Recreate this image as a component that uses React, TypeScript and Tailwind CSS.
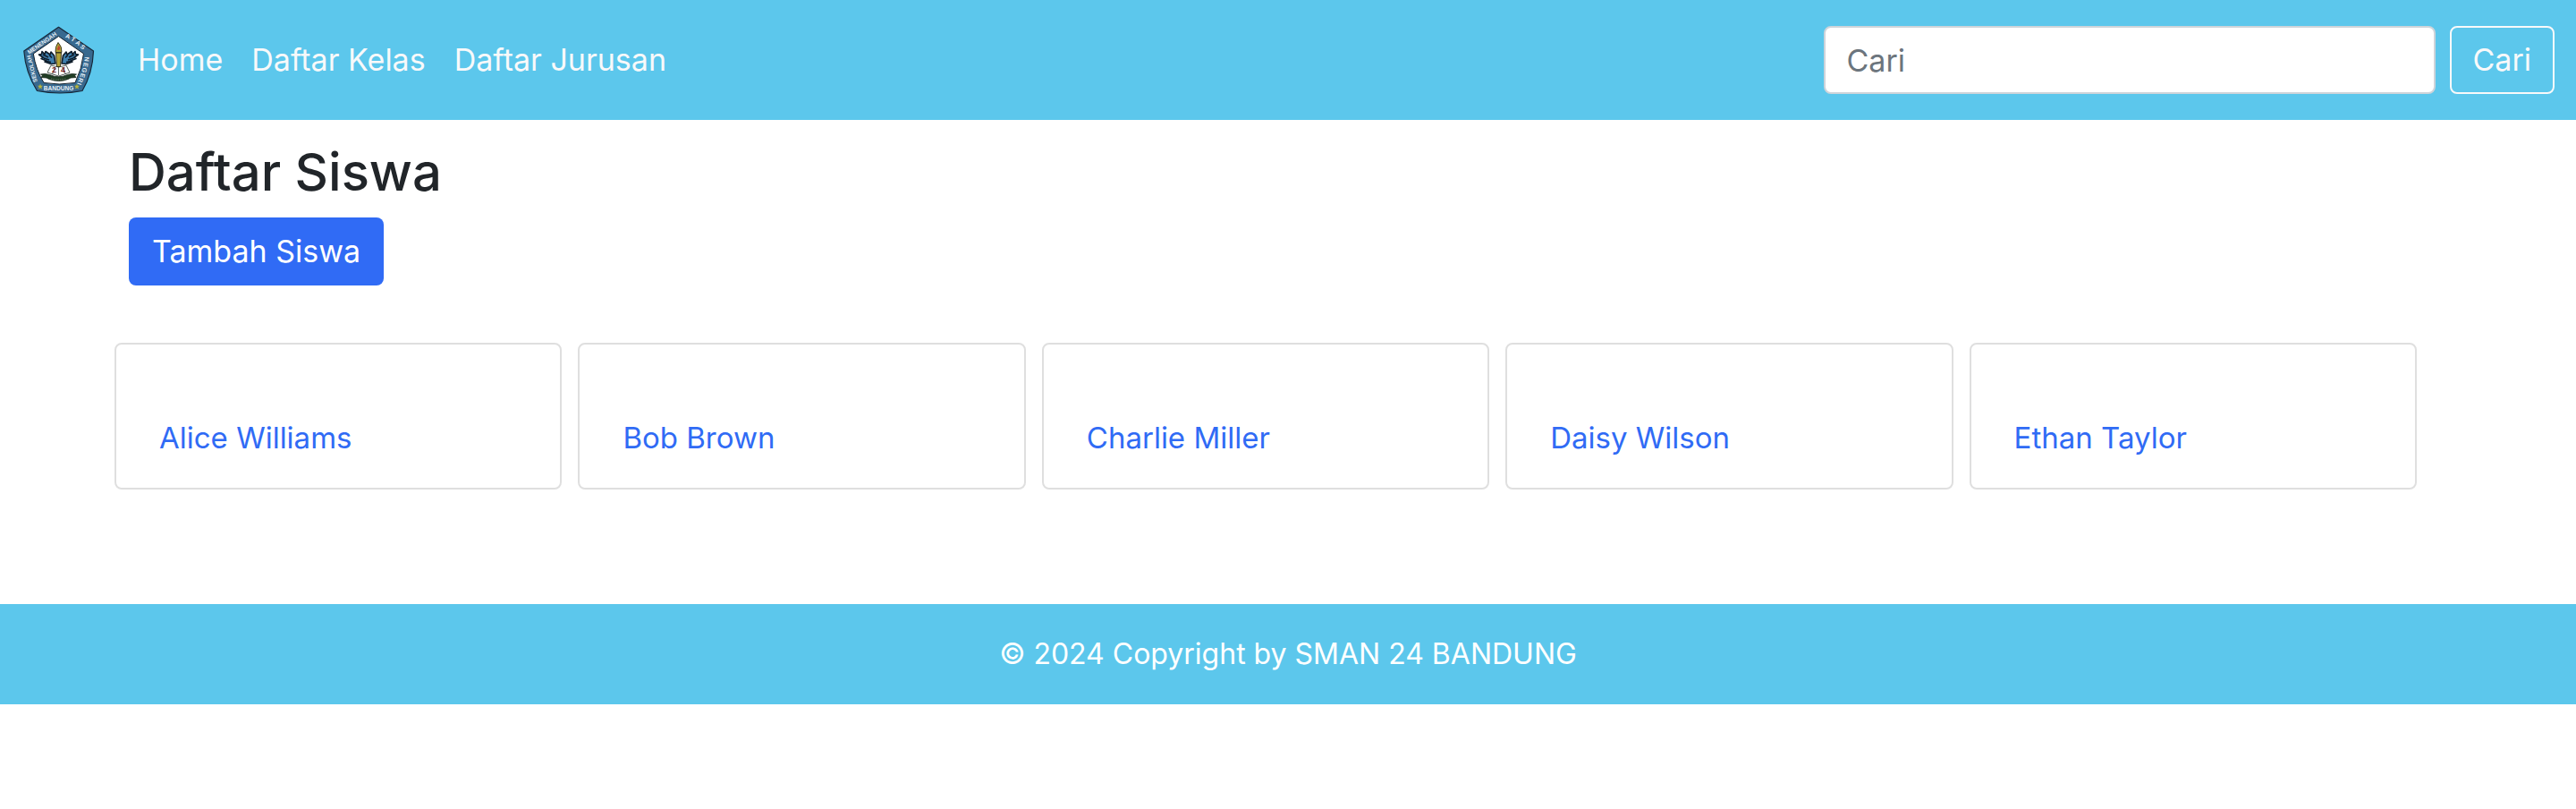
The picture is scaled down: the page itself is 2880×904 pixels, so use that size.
const navLinks = ["Home", "Daftar Kelas", "Daftar Jurusan"];
const students = ["Alice Williams", "Bob Brown", "Charlie Miller", "Daisy Wilson", "Ethan Taylor"];

function SchoolLogo() {
  return (
    <svg viewBox="26 30 80 76" className="h-[76px] w-20 font-['Liberation_Sans',sans-serif]" role="img" aria-label="SMAN 24 Bandung">
      <path d="M65.5 31.3 104.5 58Q103.500 83 92 102.500Q67 107.500 41.500 102.500Q28.500 82 26.800 58Z" fill="#38698f" stroke="#16283a" strokeWidth="1.200" strokeLinejoin="round" />
      <path d="M65.500 41.500 93.500 61Q91.500 78 84 93.500Q66 96.500 49 93.500Q40 79 37.300 61Z" fill="#fff" stroke="#13202c" strokeWidth="1" />
      <g fill="#e4eef5" fontSize="7" fontWeight="bold" textAnchor="middle">
        <text transform="translate(48.200 51) rotate(-35)" fontSize="6.500">MENENGAH</text>
        <text transform="translate(75 43.800) rotate(22)">A</text>
        <text transform="translate(80.500 47) rotate(32)">T</text>
        <text transform="translate(86 51) rotate(36)">A</text>
        <text transform="translate(91 55.300) rotate(42)">S</text>
        <text transform="translate(35 78) rotate(-104)" fontSize="6.300" dy="3">SEKOLAH</text>
        <text transform="translate(94.500 67) rotate(94)">N</text>
        <text transform="translate(93.500 73) rotate(98)">E</text>
        <text transform="translate(92 79) rotate(101)">G</text>
        <text transform="translate(90 84.800) rotate(106)">E</text>
        <text transform="translate(88 90) rotate(109)">R</text>
        <text transform="translate(86.500 94) rotate(110)">I</text>
        <text x="65.500" y="101.800" fontSize="6.600">BANDUNG</text>
      </g>
      <g fill="#b9b53b">
        <path d="m45 94.500.8 2.200h2.300l-1.800 1.500.7 2.400-2-1.400-2 1.400.7-2.400-1.800-1.500h2.300z" />
        <path d="m86 94.500.8 2.200h2.300l-1.800 1.500.7 2.400-2-1.400-2 1.400.7-2.400-1.800-1.500h2.300z" />
      </g>
      <g fill="#3f7fae" stroke="#0f1d2a" strokeWidth="1.600" strokeLinejoin="round">
        <path d="m47 58.500 3 3 1-3 5 3.500 1-3 3.500 4 1.500 9-5 .5-7-2.500 2-1-6-2.500 2.500-1-5-3.500 3-.5z" />
        <path d="m84 58.500-3 3-1-3-5 3.500-1-3-3.500 4-1.500 9 5 .5 7-2.500-2-1 6-2.500-2.500-1 5-3.500-3-.5z" />
        <path d="m48 62 6 3m-5 1 6 2m-3 1.500 5 1m-2-8 3 3M83 62l-6 3m5 1-6 2m3 1.500-5 1m2-8-3 3" fill="none" />
      </g>
      <path d="m57 74-4 8 12.500 4L78 82l-4-8-8.500 2z" fill="#fff" stroke="#26312b" strokeWidth=".8" />
      <path d="M65.500 74v11m-4-9-3 8m11-8 4 8" fill="none" stroke="#26312b" strokeWidth=".7" />
      <path d="M62.500 60h6l-1 15.500h-4z" fill="#b3a338" stroke="#302e16" strokeWidth=".9" />
      <path d="M62 59.500Q61.500 53 65 48.500Q69.500 53 69 59.500z" fill="#b3a338" stroke="#302e16" strokeWidth=".9" />
      <path d="M65.500 51.500q3 3 .8 5.500h-2q-1.300-2 .4-3.200z" fill="#c04b2c" />
      <g fill="#741f25" fontSize="9" fontWeight="bold" textAnchor="middle">
        <text x="60.500" y="82">2</text>
        <text x="70.500" y="82">4</text>
      </g>
      <path d="m45.500 84 5-.5 5 1q10 4.500 20 0l5-1 5 .5-2 1.500 1.500 2-6 .5-3 1.500q-10 4-21 0l-3-1.500-6-.5 1.500-2z" fill="#203d24" stroke="#142518" strokeWidth=".8" />
      <path d="M57 89q8.500 2 17 0" fill="none" stroke="#6d806c" strokeWidth="1" strokeDasharray="1.500 1" />
    </svg>
  );
}

export default function App() {
  return (
    <div className="bg-white font-['Inter',sans-serif] text-[33px] leading-[48px] text-[#212529]">
      <header className="flex items-center justify-between bg-[#5cc7ec] px-6 py-[29px] text-[34px]">
        <nav className="flex items-center gap-12" aria-label="Utama">
          <a href="#beranda" className="pl-0.5">
            <SchoolLogo />
          </a>
          <div className="flex items-center gap-8">
            {navLinks.map((label) => (
              <a key={label} href="#" className="text-[#f8f9fa]">
                {label}
              </a>
            ))}
          </div>
        </nav>
        <form className="flex gap-4" role="search" onSubmit={(e) => e.preventDefault()}>
          <input
            type="search"
            placeholder="Cari"
            aria-label="Cari"
            className="h-[76px] w-[684px] rounded-lg border-2 border-[#ced4da] bg-white px-6 placeholder:text-[#6c757d]"
          />
          <button type="submit" className="h-[76px] rounded-lg border-2 border-[#f8f9fa] px-6 text-[#f8f9fa]">
            Cari
          </button>
        </form>
      </header>

      <main className="pt-6 pr-[178px] pb-32 pl-32">
        <div className="px-4">
          <h1 className="mb-4 text-[58px] leading-[69px] font-medium">Daftar Siswa</h1>
          <button type="button" className="h-[76px] rounded-lg bg-[#306bf5] px-[26px] text-[34px] text-white">
            Tambah Siswa
          </button>
        </div>
        <ul className="mt-16 grid grid-cols-5 gap-[18px]">
          {students.map((name) => (
            <li key={name} className="rounded-lg border-2 border-[#dfdfdf] px-12 pt-20 pb-8">
              <a href="#" className="text-[#306bf5]">
                {name}
              </a>
            </li>
          ))}
        </ul>
      </main>

      <footer className="bg-[#5cc7ec] p-8 text-center text-[32px] leading-[48px] text-white">
        © 2024 Copyright by SMAN 24 BANDUNG
      </footer>
    </div>
  );
}
